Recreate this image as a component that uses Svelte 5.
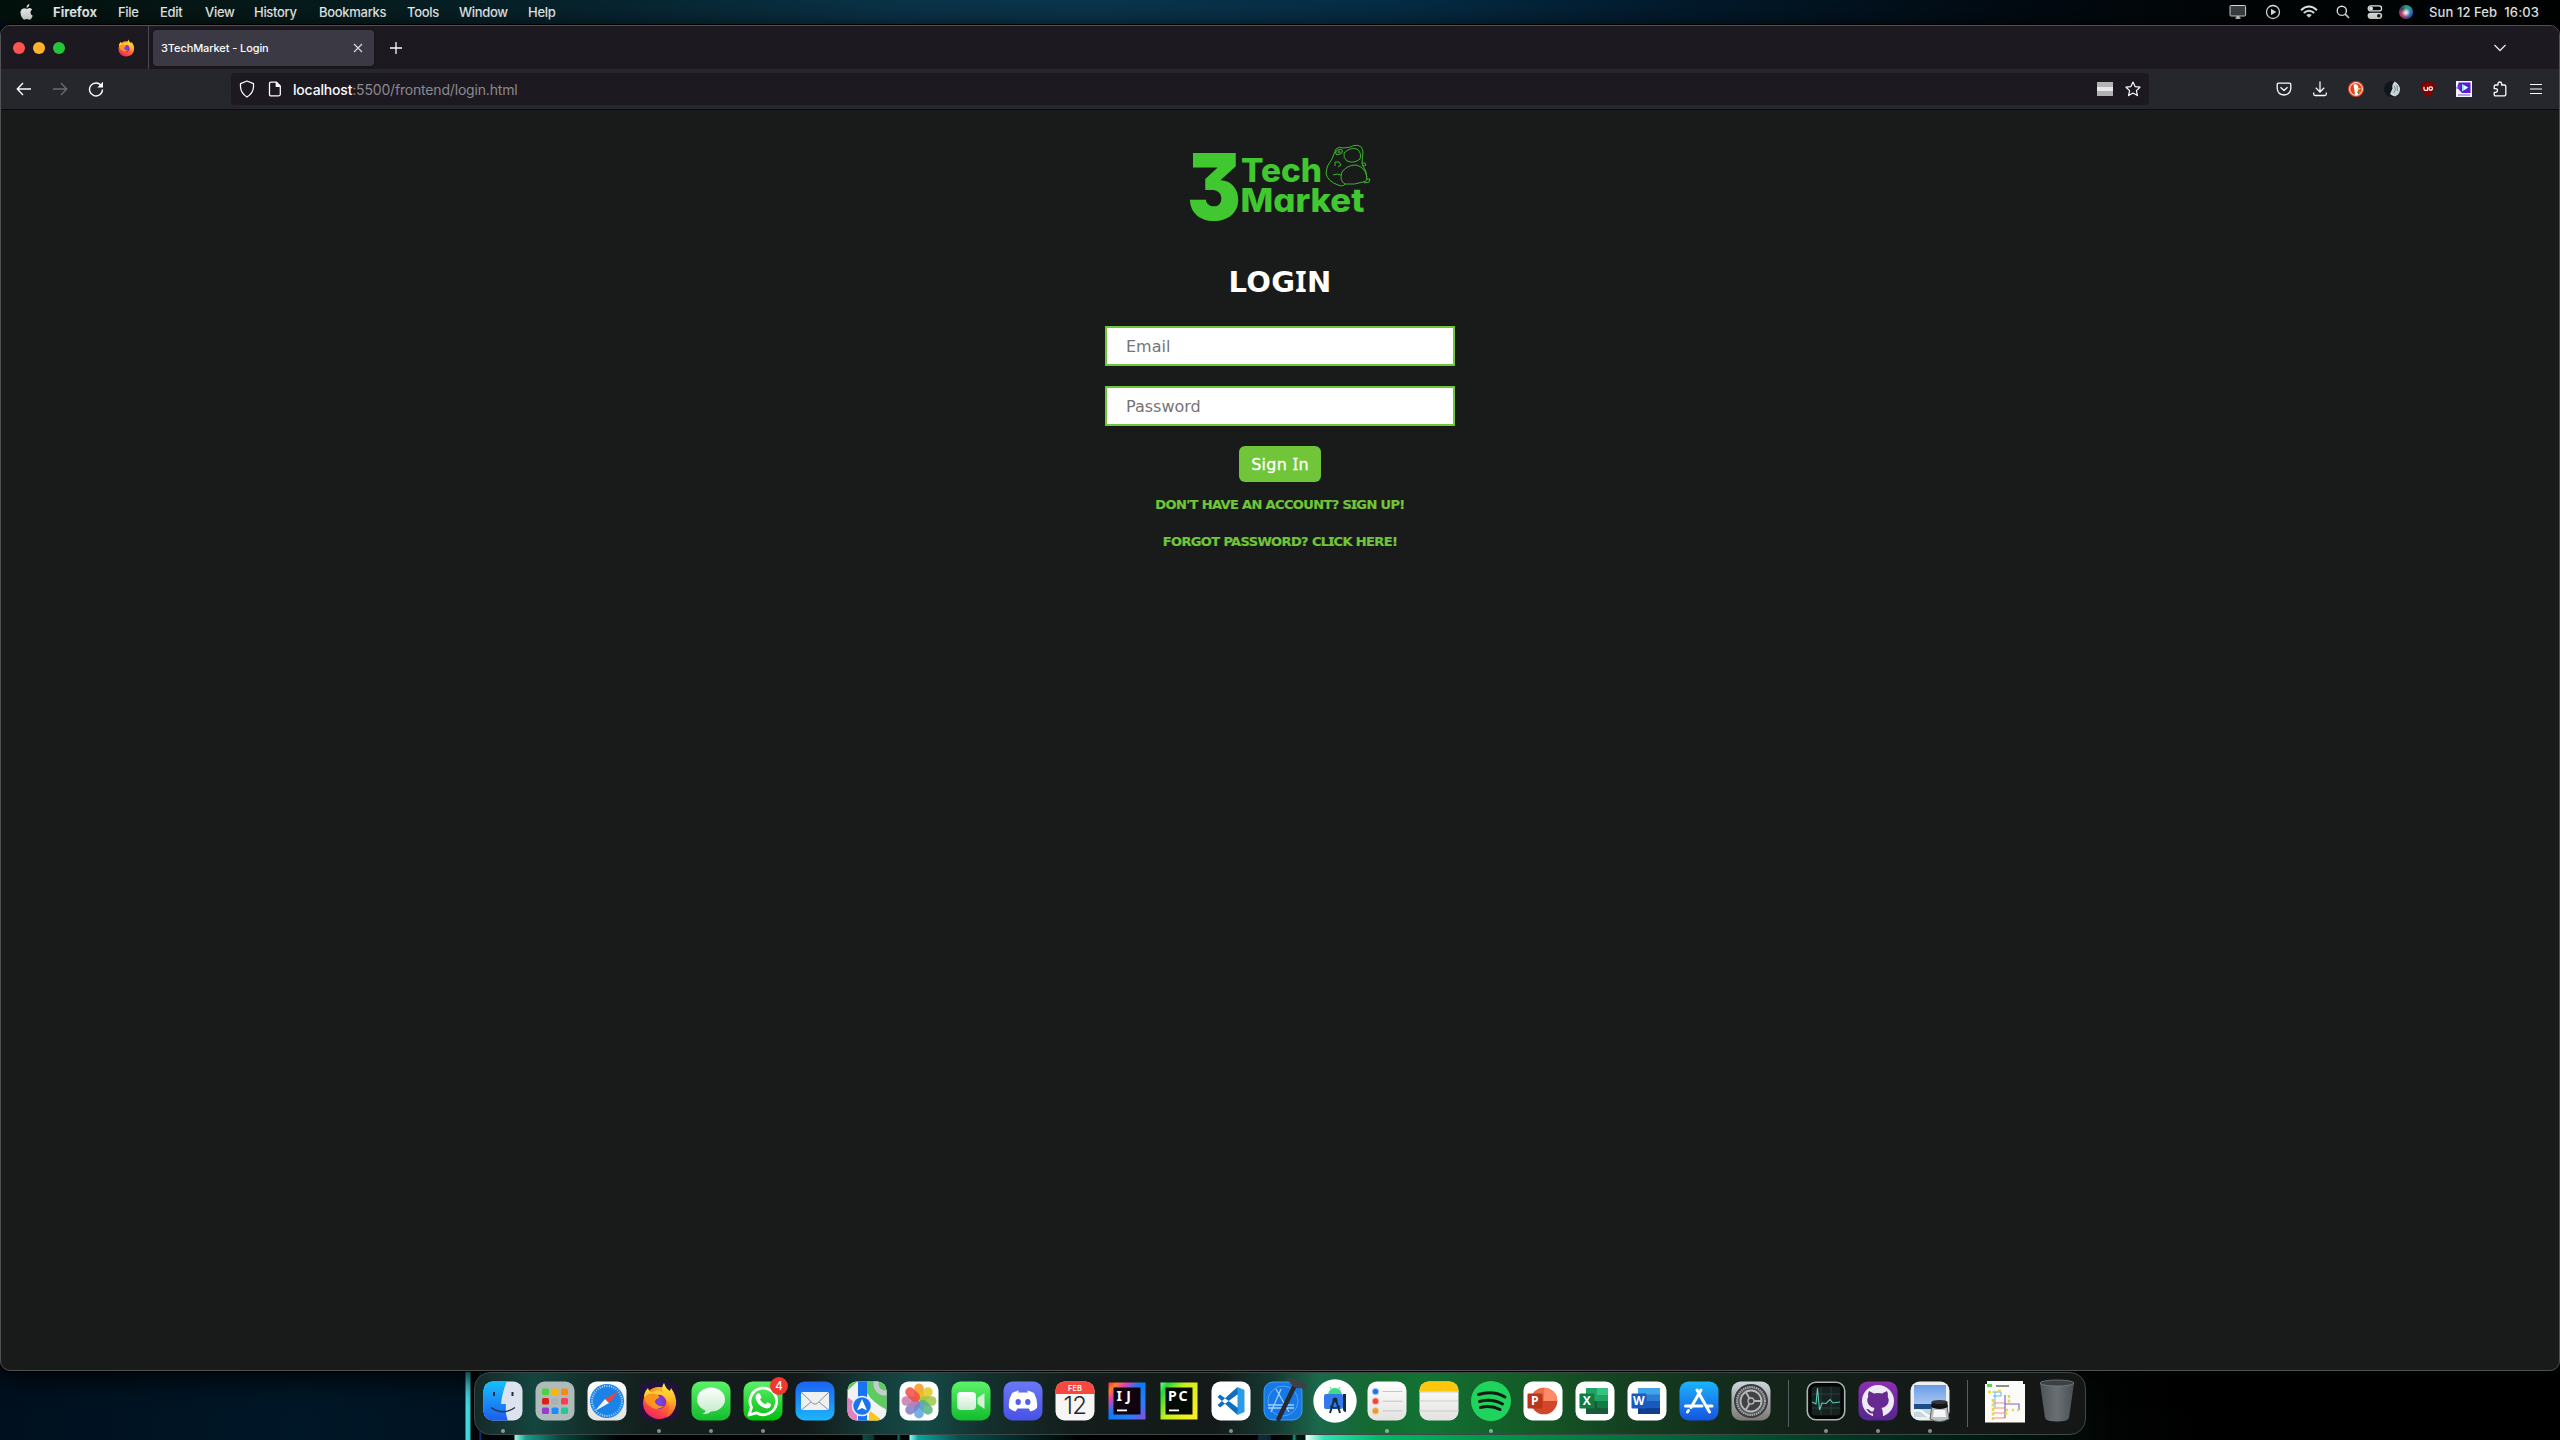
<script>
  const menus = ['File', 'Edit', 'View', 'History', 'Bookmarks', 'Tools', 'Window', 'Help'];
  const petals = ['#f79a1e', '#e3c81c', '#9cc746', '#55b37d', '#5aa5dd', '#7f7cc6', '#c47bae', '#ee4f43'];
  const pads = ['#4fd13c', '#ffb400', '#f98a10', '#e21d18', '#aab0b4', '#ff3a55', '#9a3bd0', '#1a8cff', '#20c997'];
  const ticks = Array.from({ length: 40 }, (_, i) => i * 9);
</script>

{#snippet fox()}
  <circle cx="0" cy="2" r="16" fill="url(#foxBody)" />
  <path d="M-15-4Q-15-9-11-13Q-10-9-7-9Q0-13 4-8Q2-14 5-18Q7-12 11-10L12-13Q18-5 17 4Q15 13 7 17Q14 5 6-3Z" fill="url(#foxTail)" />
  <circle cx="0" cy="1" r="7.2" fill="url(#foxOrb)" />
  <path d="M-15-3Q-11-9-3-7Q1-5 0-3Q-4-2-4 1Q-2 6 5 5Q-3 11-9 5Q-14 2-15-3Z" fill="#ff9420" />
{/snippet}

<svg class="defs" aria-hidden="true">
  <defs>
    <linearGradient id="foxBody" x1=".8" y1="0" x2=".2" y2="1"><stop stop-color="#ffcb25" /><stop offset=".5" stop-color="#ff6a2a" /><stop offset="1" stop-color="#f5156c" /></linearGradient>
    <linearGradient id="foxTail" x1=".5" y1="0" x2=".5" y2="1"><stop stop-color="#fff04a" /><stop offset=".5" stop-color="#ffb524" /><stop offset="1" stop-color="#ff4a3f" /></linearGradient>
    <radialGradient id="foxOrb"><stop stop-color="#6a4dff" /><stop offset="1" stop-color="#8d2bb5" /></radialGradient>
    <linearGradient id="green" x2="0" y2="1"><stop stop-color="#5cf26a" /><stop offset="1" stop-color="#12bd2c" /></linearGradient>
    <linearGradient id="wa" x2="0" y2="1"><stop stop-color="#5fef6b" /><stop offset="1" stop-color="#02bf0c" /></linearGradient>
    <linearGradient id="blue" x2="0" y2="1"><stop stop-color="#1d62f0" /><stop offset="1" stop-color="#1cb6fb" /></linearGradient>
    <linearGradient id="store" x2="0" y2="1"><stop stop-color="#1bb4fb" /><stop offset="1" stop-color="#1554e0" /></linearGradient>
    <linearGradient id="finder" x2="0" y2="1"><stop stop-color="#16c1fb" /><stop offset="1" stop-color="#1c5cf0" /></linearGradient>
    <linearGradient id="paper" x2="0" y2="1"><stop stop-color="#fff" /><stop offset="1" stop-color="#e3e2e0" /></linearGradient>
    <linearGradient id="bubble" x2="0" y2="1"><stop stop-color="#fff" /><stop offset="1" stop-color="#c9ecce" /></linearGradient>
    <linearGradient id="steel" x2="0" y2="1"><stop stop-color="#cdd6dc" /><stop offset="1" stop-color="#7c7875" /></linearGradient>
    <linearGradient id="violet" x2="0" y2="1"><stop stop-color="#8d2fb0" /><stop offset="1" stop-color="#54278f" /></linearGradient>
    <linearGradient id="discord" x2="0" y2="1"><stop stop-color="#6a78f5" /><stop offset="1" stop-color="#4752e6" /></linearGradient>
    <linearGradient id="ij" x1="0" y1="0" x2="1" y2="1"><stop stop-color="#fe2857" /><stop offset=".12" stop-color="#fc801d" /><stop offset=".25" stop-color="#e63fb0" /><stop offset=".45" stop-color="#087cfa" /><stop offset=".75" stop-color="#2a7df5" /><stop offset="1" stop-color="#8a4be8" /></linearGradient>
    <linearGradient id="pc" x1="0" y1="0" x2="1" y2=".6"><stop stop-color="#8df59a" /><stop offset=".15" stop-color="#21d73a" /><stop offset=".5" stop-color="#c8ee1c" /><stop offset="1" stop-color="#f4ee22" /></linearGradient>
    <linearGradient id="sky" x2="0" y2="1"><stop stop-color="#6a9be6" /><stop offset="1" stop-color="#a6c6f2" /></linearGradient>
    <linearGradient id="bin" x2="1" y2="0"><stop stop-color="#50555a" /><stop offset=".5" stop-color="#6a6f74" /><stop offset="1" stop-color="#4a4f54" /></linearGradient>
    <clipPath id="tile"><rect x="-19.5" y="-19.5" width="39" height="39" rx="9" /></clipPath>
  </defs>
</svg>

<div class="desktop">
  <header class="menubar">
    <nav class="menus">
      <svg class="apple" viewBox="0 0 12 15"><path fill="#e8eceb" d="M8.6 0Q8.8 2.8 6 3.6Q6 .8 8.6 0ZM6.2 4.4Q7 4.4 8 3.9Q10.2 3.4 11.3 5.2Q9.5 6.3 9.7 8.2Q9.9 10.2 11.8 11Q10.5 14.6 8.7 14.7Q7.8 14.7 7.2 14.3Q6.2 13.9 5.2 14.4Q4 15 3 14.2Q.2 11.6.3 8Q.6 4.3 3.8 3.9Q5 3.9 6.2 4.4Z" /></svg>
      <b>Firefox</b>
      {#each menus as m}<span>{m}</span>{/each}
    </nav>
    <div class="status">
      <svg width="18" height="16" viewBox="0 0 18 16"><rect x="1" y="1.5" width="15.6" height="10.5" rx="1" fill="#3c4043" stroke="#dadcdd" /><path d="M6.500 14.200h5" stroke="#dadcdd" stroke-width="1.500" /><path d="M9 12v2" stroke="#dadcdd" stroke-width="3" /></svg>
      <svg width="16" height="16" viewBox="0 0 16 16"><circle cx="8" cy="8" r="6.5" fill="none" stroke="#e4e6e7" stroke-width="1.3" /><path d="M6 4.8v6.4L11.3 8Z" fill="#e4e6e7" /></svg>
      <svg width="18" height="14" viewBox="0 0 18 14"><g fill="none" stroke="#e8eaeb" stroke-width="2"><path d="M1 5.2Q9-2.2 17 5.2M3.8 8Q9 3.4 14.2 8" /></g><path d="M9 12.8L6.2 10Q9 7.9 11.8 10Z" fill="#e8eaeb" /></svg>
      <svg width="14" height="14" viewBox="0 0 14 14"><g fill="none" stroke="#e4e6e7" stroke-width="1.4"><circle cx="5.8" cy="5.8" r="4.6" /><path d="M9.2 9.2L13 13" stroke-width="1.7" /></g></svg>
      <svg width="16" height="14" viewBox="0 0 16 14"><rect x="1.2" y=".9" width="13.4" height="5" rx="2.5" fill="none" stroke="#e8eaeb" stroke-width="1.3" /><circle cx="4" cy="3.4" r="2" fill="#e8eaeb" /><rect x=".6" y="7.7" width="14.6" height="6.2" rx="3.1" fill="#e8eaeb" /><circle cx="11.8" cy="10.8" r="1.8" fill="#15191b" /></svg>
      <span class="siri"></span>
      <time>Sun 12 Feb&nbsp; 16:03</time>
    </div>
  </header>

  <section class="window">
    <div class="titlebar">
      <div class="lights"><i class="red"></i><i class="amber"></i><i class="lime"></i></div>
      <div class="pinned"><svg width="18" height="18" viewBox="-19 -19 38 38">{@render fox()}</svg></div>
      <div class="tab">
        <span>3TechMarket - Login</span>
        <svg width="10" height="10" viewBox="0 0 10 10"><path d="M1 1l8 8M9 1L1 9" stroke="#dcdbe0" stroke-width="1.1" /></svg>
      </div>
      <svg class="plus" width="12" height="12" viewBox="0 0 12 12"><path d="M6 0v12M0 6h12" stroke="#fbfbfe" stroke-width="1.3" /></svg>
      <svg class="chevron" width="12" height="8" viewBox="0 0 12 8"><path d="M.5 1l5.500 5.500L11.500 1" fill="none" stroke="#e6e5ea" stroke-width="1.3" /></svg>
    </div>

    <div class="toolbar">
      <div class="history">
        <svg width="16" height="16" viewBox="0 0 16 16"><path d="M15 8H1.500M7 2L1.300 8L7 14" fill="none" stroke="#fbfbfe" stroke-width="1.400" /></svg>
        <svg width="16" height="16" viewBox="0 0 16 16"><path d="M1 8h13.500M9 2l5.700 6L9 14" fill="none" stroke="#6b6c71" stroke-width="1.300" /></svg>
        <svg width="16" height="16" viewBox="0 0 16 16"><path d="M13.500 5A6.500 6.500 0 1 0 14.500 8.500" fill="none" stroke="#fbfbfe" stroke-width="1.400" /><path d="M15 .8v5.700H9.300Z" fill="#fbfbfe" /></svg>
      </div>
      <div class="urlbar">
        <svg class="shield" width="16" height="18" viewBox="0 0 16 18"><path d="M8 1L14.500 3.700V7Q14 13.500 8 17Q2 13.500 1.500 7V3.700Z" fill="none" stroke="#fbfbfe" stroke-width="1.300" stroke-linejoin="round" /></svg>
        <svg class="doc" width="14" height="16" viewBox="0 0 14 16"><path d="M3 1.200H8.500L12.300 5V13.300Q12.300 14.800 10.800 14.800H3Q1.500 14.800 1.500 13.300V2.700Q1.500 1.200 3 1.200ZM8.300 1.200V5.300H12.300" fill="none" stroke="#fbfbfe" stroke-width="1.300" /><path d="M8.300 1v4.300h4Z" fill="#fbfbfe" /></svg>
        <p><b>localhost</b>:5500/frontend/login.html</p>
        <span class="stripes"></span>
        <svg class="star" width="16" height="16" viewBox="0 0 16 16"><path d="M8 1.100L10.100 5.600L15 6.200L11.400 9.600L12.400 14.600L8 12.100L3.600 14.600L4.600 9.600L1 6.200L5.900 5.600Z" fill="none" stroke="#fbfbfe" stroke-width="1.200" stroke-linejoin="round" /></svg>
      </div>
      <div class="extensions">
        <svg width="16" height="16" viewBox="0 0 16 16"><path d="M1.200 3.500Q1.200 2.200 2.500 2.200H13.500Q14.800 2.200 14.800 3.500V7.500Q14.300 13.500 8 14Q1.700 13.500 1.200 7.500ZM4.500 6.300L8 9.500L11.500 6.300" fill="none" stroke="#fbfbfe" stroke-width="1.300" stroke-linejoin="round" /></svg>
        <svg width="16" height="16" viewBox="0 0 16 16"><path d="M8 .5V10.500M3.800 6.800L8 11L12.200 6.800M1.700 11.500V13Q1.700 14.500 3.200 14.500H12.800Q14.300 14.500 14.300 13V11.500" fill="none" stroke="#fbfbfe" stroke-width="1.300" /></svg>
        <svg width="16" height="16" viewBox="0 0 16 16"><circle cx="8" cy="8" r="8" fill="#e0411f" /><circle cx="8" cy="8" r="6.300" fill="none" stroke="#fff" /><path d="M5.500 3.500Q10.500 2.500 10.300 7L12.500 8L10 9L10 13.500Q8 14.500 7 13.500Z" fill="#fff" /><path d="M9.500 7.500l3.500-.5l-1 1.800l-2.500.4Z" fill="#f5b52c" /><path d="M9 11l3-1v2.500l-3-.6Z" fill="#4fae3a" /></svg>
        <svg width="16" height="16" viewBox="0 0 16 16"><circle cx="8" cy="8" r="8" fill="#10171b" /><path d="M10.500 .4Q7.500 3.500 8.500 7.500L6 13Q8 15 11 15.400Q16.500 13 16 7Q14.500 2 10.500 .4Z" fill="#c9d3d8" /><path d="M10.500 5l1 4-2 3M13 4l.5 6" fill="none" stroke="#7b8a92" /></svg>
        <svg width="16" height="16" viewBox="0 0 16 16"><path d="M8 0Q11 2 15 2Q15.500 12 8 16Q.5 12 1 2Q5 2 8 0Z" fill="#800000" /><path d="M4 5.800v2.400Q4 9.300 5.500 9.300H7.500V5.800M9 7.500a1.700 1.700 0 1 0 3.400 0a1.700 1.700 0 1 0-3.400 0" fill="none" stroke="#fff" stroke-width="1.200" /></svg>
        <svg width="16" height="16" viewBox="0 0 16 16"><path d="M0 0h16v16H0Z" fill="#f6f2ff" /><path d="M2.500 1.500H14.500V12H6L1.500 7Z" fill="#5a1bd0" /><path d="M6 3l6.500 3.500L6 10.500Z" fill="#7ff1ff" /><path d="M8 4.500l3.500 2L8 9Z" fill="#fff" /><path d="M1 5h4M0 7h4M2 14h12" stroke="#7a4fd8" /></svg>
        <svg width="16" height="16" viewBox="0 0 16 16"><path d="M6 4V3Q6 1 7.800 1Q9.600 1 9.600 3V4H12.500Q13.800 4 13.800 5.300V13.500Q13.800 14.800 12.500 14.800H3.500Q2.200 14.800 2.200 13.500V11.300H3.500Q5.500 11.300 5.500 9.500Q5.500 7.700 3.500 7.700H2.200V5.300Q2.200 4 3.500 4Z" fill="none" stroke="#fbfbfe" stroke-width="1.300" stroke-linejoin="round" /></svg>
        <svg width="16" height="16" viewBox="0 0 16 16"><path d="M2 3.500h12M2 8h12M2 12.500h12" stroke="#fbfbfe" stroke-width="1.200" /></svg>
      </div>
    </div>

    <main class="page">
      <svg class="logo" width="184" height="82" viewBox="1188 143 184 82" role="img" aria-label="3 Tech Market">
        <g fill="#41c72f">
          <text class="three" x="1187" y="220" textLength="54" lengthAdjust="spacingAndGlyphs">3</text>
          <text class="word" x="1241" y="182" textLength="81" lengthAdjust="spacingAndGlyphs">Tech</text>
          <text class="word" x="1240.500" y="212" textLength="124" lengthAdjust="spacingAndGlyphs">Market</text>
        </g>
        <g fill="none" stroke="#3cb52d" stroke-width="1">
          <path d="M1336 149Q1339 146 1343 148Q1350 148 1354 145.500Q1363 144 1363 153Q1362 160 1362 164Q1367 171 1367 179Q1366 182 1363 182Q1355 185 1345 184Q1343 187 1338 185Q1327 181 1326 173Q1326 166 1332 159Q1334 154 1336 149Z" />
          <ellipse cx="1339" cy="152" rx="3.500" ry="2.300" transform="rotate(-25 1339 152)" />
          <circle cx="1339" cy="152" r="1" />
          <path d="M1344 153Q1350 147 1357 149Q1362 153 1360 159Q1354 164 1347 161Q1343 158 1344 153ZM1342 172Q1347 165 1356 165Q1365 167 1367 177M1342 172Q1339 181 1345 184M1335 166L1335 162L1339 162L1341 165L1338 167M1333 175Q1337 173 1341 175M1362 163Q1366 162 1366 165Q1364 167 1362 165M1366 179L1370 179L1369 182L1364 183" />
        </g>
      </svg>
      <h1>LOG<i>I</i>N</h1>
      <form onsubmit={(e) => e.preventDefault()}>
        <input type="email" placeholder="Email" />
        <input type="password" placeholder="Password" />
        <button>Sign <i>I</i>n</button>
      </form>
      <a class="signup" href="#signup">DON'T HAVE AN ACCOUNT? S<i>I</i>GN UP!</a>
      <a class="forgot" href="#forgot">FORGOT PASSWORD? CL<i>I</i>CK HERE!</a>
    </main>
  </section>

  <footer class="dock">
    <div class="app running"><svg viewBox="-26 -26 52 52"><g clip-path="url(#tile)"><path d="M-20-20H20V20H-20Z" fill="#dde3ee" /><path d="M-20-20H4Q-1-8-2 3H3Q2 13 5 20H-20Z" fill="url(#finder)" /></g><path d="M-9-9v4M9.500-9v4" stroke="#222b3c" stroke-width="2" /><path d="M-12 6.500Q0 15 12 6.500" fill="none" stroke="#28344a" stroke-width="1.500" /></svg></div>
    <div class="app"><svg viewBox="-26 -26 52 52"><rect x="-19.500" y="-19.500" width="39" height="39" rx="9" fill="#afbbb8" />{#each pads as p, i}<rect x={-13 + (i % 3) * 9.5} y={-12.5 + Math.floor(i / 3) * 9.5} width="7" height="6.500" rx="1.500" fill={p} />{/each}</svg></div>
    <div class="app"><svg viewBox="-26 -26 52 52"><rect x="-19.500" y="-19.500" width="39" height="39" rx="9" fill="url(#paper)" /><circle r="17" fill="#1b83e8" />{#each ticks as t}<path d="M0-16V-14" stroke="#d8ebfb" stroke-width=".8" transform="rotate({t})" />{/each}<path d="M12-10L2 2L-2-2Z" fill="#f4413b" /><path d="M-12 10L2 2L-2-2Z" fill="#f1f3f5" /></svg></div>
    <div class="app running"><svg viewBox="-26 -26 52 52"><rect x="-19.500" y="-19.500" width="39" height="39" rx="9" fill="#20143a" />{@render fox()}</svg></div>
    <div class="app running"><svg viewBox="-26 -26 52 52"><rect x="-19.500" y="-19.500" width="39" height="39" rx="9" fill="url(#green)" /><path d="M-5 8Q-5 12-9 13Q-3 13.500 0 10.500Z" fill="#d8efdb" /><ellipse cy="-1.500" rx="14" ry="12" fill="url(#bubble)" /></svg></div>
    <div class="app running"><svg viewBox="-26 -26 52 52"><rect x="-19.500" y="-19.500" width="39" height="39" rx="9" fill="url(#wa)" /><path d="M-14 14L-11.500 6.500A13.300 13.300 0 1 1-6.500 11.800Z" fill="none" stroke="#fff" stroke-width="2.800" stroke-linejoin="round" /><path d="M-7-6Q-5-9-3-7L-1.500-3.500L-3-1.500Q-1 2 2.500 3.300L4.500 1.300L8 3Q8 7 4 7.500Q-5 6-7.500-3Z" fill="#fff" /></svg><span class="badge">4</span></div>
    <div class="app"><svg viewBox="-26 -26 52 52"><rect x="-19.500" y="-19.500" width="39" height="39" rx="9" fill="url(#blue)" /><rect x="-14" y="-9" width="28" height="18" rx="2" fill="#eef0f2" /><path d="M-13-8L-2 2.500Q0 4 2 2.500L13-8M-13 8.500L-4 1M13 8.500L4 1" fill="none" stroke="#8b9298" stroke-width="1" /></svg></div>
    <div class="app"><svg viewBox="-26 -26 52 52"><g clip-path="url(#tile)"><path d="M-20-20H20V20H-20Z" fill="#f2f2f2" /><path d="M-20-20H-9L-20-10ZM0-20H20V9Q6 2 0-8Z" fill="#5ecb61" /><path d="M-20-4L-10 3V20H-20Z" fill="#e282bd" /><path d="M2 9L16 20H2Z" fill="#fcc719" /><path d="M-9-20H0V20H-9Z" fill="#1674f5" /><circle cx="18" cy="-17" r="9" fill="none" stroke="#c5ccd0" stroke-width="5" /></g><circle cx="-5" cy="5" r="9.500" fill="#1a73f0" stroke="#e9f2fc" stroke-width="1.500" /><path d="M-5-2L0 9.500L-5 7L-10 9.500Z" fill="#fff" /></svg></div>
    <div class="app"><svg viewBox="-26 -26 52 52"><rect x="-19.500" y="-19.500" width="39" height="39" rx="9" fill="#fff" />{#each petals as c, i}<rect x="-4.800" y="-17.500" width="9.600" height="17" rx="4.800" fill={c} fill-opacity=".85" transform="rotate({i * 45})" />{/each}</svg></div>
    <div class="app"><svg viewBox="-26 -26 52 52"><rect x="-19.500" y="-19.500" width="39" height="39" rx="9" fill="url(#green)" /><rect x="-14" y="-9" width="19" height="18" rx="4" fill="url(#bubble)" /><path d="M6.500-3L13.500-8V8L6.500 3Z" fill="#d3f2d6" /></svg></div>
    <div class="app"><svg viewBox="-26 -26 52 52"><rect x="-19.500" y="-19.500" width="39" height="39" rx="9" fill="url(#discord)" /><path d="M-4-10.500L-5-8.500H5L4-10.500Q8-10 11-8Q15-1 14 7Q11 10 7.500 10.500L5.500 7.500H-5.500L-7.500 10.500Q-11 10-14 7Q-15-1-11-8Q-8-10-4-10.500Z" fill="#fff" /><ellipse cx="-4.800" cy="1" rx="2.700" ry="3" fill="#5461ec" /><ellipse cx="4.800" cy="1" rx="2.700" ry="3" fill="#5461ec" /></svg></div>
    <div class="app"><svg viewBox="-26 -26 52 52"><g clip-path="url(#tile)"><path d="M-20-20H20V20H-20Z" fill="#f7f6f4" /><path d="M-20-20H20V-7H-20Z" fill="#f8473f" /></g><text class="feb" y="-10.300">FEB</text><text class="day" y="13">12</text></svg></div>
    <div class="app"><svg viewBox="-26 -26 52 52"><rect x="-18.500" y="-18.500" width="37" height="37" fill="url(#ij)" /><path d="M-13.500-13.500H13.500V13.500H-13.500Z" fill="#120310" /><path d="M-10 8.500H0V10.300H-10Z" fill="#fff" /><text class="ide" x="-10.500" textLength="14.500">IJ</text></svg></div>
    <div class="app"><svg viewBox="-26 -26 52 52"><rect x="-18.500" y="-18.500" width="37" height="37" fill="url(#pc)" /><path d="M-13.500-13.500H13.500V13.500H-13.500Z" fill="#020a04" /><path d="M-10 8.500H0V10.300H-10Z" fill="#fff" /><text class="ide" x="-11" textLength="19.500">PC</text></svg></div>
    <div class="app running"><svg viewBox="-26 -26 52 52"><rect x="-19.500" y="-19.500" width="39" height="39" rx="9" fill="#fff" /><path d="M6.500-14L13.500-11V11L6.500 14Z" fill="#2b9ae8" /><path d="M6.500-14L-13.500 4L-11 6.500L7-7ZM6.500 14L-13.500-4L-11-6.500L7 7Z" fill="#0c6fc0" /></svg></div>
    <div class="app"><svg viewBox="-26 -26 52 52"><rect x="-19" y="-19" width="38" height="38" rx="9" fill="#1878e6" stroke="#38a2f4" /><circle r="15" fill="none" stroke="#65b7f6" stroke-width=".7" /><path d="M-12 11L-2-12M-7-12L6 11M-15 4H11M-15 7H11" fill="none" stroke="#9fd0f8" stroke-width="1.300" /><path d="M11-14L-4.500 18" stroke="#26282d" stroke-width="4.500" stroke-linecap="round" /><path d="M2-22Q12-24.500 18-19L24-17.500L22.500-11.500L17-13Q11-12 9-16Q6-20 2-22Z" fill="#3d4147" /></svg></div>
    <div class="app"><svg viewBox="-26 -26 52 52"><circle r="21.700" fill="#fff" /><path d="M-7-6A7 7 0 0 1 7-6Z" fill="#3ddc84" /><path d="M-5-14l2 3M5-14l-2 3" stroke="#3ddc84" /><rect x="-11" y="-7" width="19" height="15" rx="2" fill="#3478ee" /><path d="M8-7h3v18q-3 0-3-3Z" fill="#142c42" /><circle cy="-1" r="2.500" fill="#142c42" /><path d="M-1-1L-5 12M1-1L5 12" fill="none" stroke="#142c42" stroke-width="2" /><path d="M-5 5Q0 9 5 5" fill="none" stroke="#142c42" stroke-width="1.500" /></svg></div>
    <div class="app running"><svg viewBox="-26 -26 52 52"><rect x="-19.500" y="-19.500" width="39" height="39" rx="9" fill="url(#paper)" />{#each ['#1b76f2', '#f2433c', '#f19a27'] as c, i}<circle cx="-11.500" cy={-9.5 + i * 9.7} r="2.600" fill={c} stroke={c} stroke-opacity=".4" stroke-width="2" /><path d="M-4.500 {-9.5 + i * 9.7}H15.500" stroke="#c6c6c6" />{/each}</svg></div>
    <div class="app"><svg viewBox="-26 -26 52 52"><g clip-path="url(#tile)"><path d="M-20-20H20V20H-20Z" fill="url(#paper)" /><path d="M-20-20H20V-9.500H-20Z" fill="#fdc70b" /><path d="M-20-9H20M-20 0H20M-20 10H20" stroke="#c8c5c0" stroke-width=".8" /></g></svg></div>
    <div class="app running"><svg viewBox="-26 -26 52 52"><circle r="20" fill="#1ed45c" /><path d="M-12.500-6.500Q2-11 14-4M-11.500 .5Q1-3 11.500 3M-10.500 6.500Q0 4 9 8.500" fill="none" stroke="#111b14" stroke-width="3" stroke-linecap="round" /></svg></div>
    <div class="app"><svg viewBox="-26 -26 52 52"><rect x="-19.500" y="-19.500" width="39" height="39" rx="9" fill="#fff" /><circle cx="1" r="13.300" fill="#d2472b" /><path d="M1-13.300A13.300 13.300 0 0 1 14.300 0H1Z" fill="#ff8b66" /><path d="M1-13.300A13.300 13.300 0 0 0-12.300 0H1Z" fill="#ed6b47" /><rect x="-15.500" y="-7.500" width="15" height="15" rx="1" fill="#b9351b" /><text class="office" x="-8.200">P</text></svg></div>
    <div class="app"><svg viewBox="-26 -26 52 52"><rect x="-19.500" y="-19.500" width="39" height="39" rx="9" fill="#fff" /><path d="M-9-13H13V13H-9Z" fill="#21a366" /><path d="M2-13H13V-6H2Z" fill="#33c481" /><path d="M-9 0H13V13H-9Z" fill="#185c37" /><path d="M2 0H13V7H2Z" fill="#107c41" /><rect x="-15.500" y="-7.500" width="15" height="15" rx="1" fill="#107c41" /><text class="office" x="-8.200">X</text></svg></div>
    <div class="app"><svg viewBox="-26 -26 52 52"><rect x="-19.500" y="-19.500" width="39" height="39" rx="9" fill="#fff" /><path d="M-9-13H13V13H-9Z" fill="#41a5ee" /><path d="M-9-6.500H13V13H-9Z" fill="#2b7cd3" /><path d="M-9 0H13V13H-9Z" fill="#185abd" /><path d="M-9 7H13V13H-9Z" fill="#103f91" /><rect x="-15.500" y="-7.500" width="15" height="15" rx="1" fill="#185abd" /><text class="office" x="-8.200">W</text></svg></div>
    <div class="app"><svg viewBox="-26 -26 52 52"><rect x="-19.500" y="-19.500" width="39" height="39" rx="9" fill="url(#store)" /><path d="M2-11L-8 6.500M-2-11L10.500 11M-13.500 5H3M8.500 5H13M-10.500 9.500L-11.500 11" fill="none" stroke="#fff" stroke-width="3" stroke-linecap="round" /></svg></div>
    <div class="app"><svg viewBox="-26 -26 52 52"><rect x="-19.500" y="-19.500" width="39" height="39" rx="9" fill="url(#steel)" /><circle r="17" fill="#3c3d3f" /><circle r="14" fill="#55575a" stroke="#a9abad" stroke-width="2" stroke-dasharray="1.500 .7" /><circle r="10.500" fill="#404244" stroke="#b5b7b9" stroke-width="1.800" /><path d="M0 0H11M0 0L-5.500-9.500M0 0L-5.500 9.500" stroke="#b5b7b9" stroke-width="1.800" /><circle r="3" fill="#404244" stroke="#b5b7b9" stroke-width="1.300" /></svg></div>
    <hr />
    <div class="app running"><svg viewBox="-26 -26 52 52"><rect x="-18.700" y="-18.700" width="37.400" height="37.400" rx="8.500" fill="#050505" stroke="#aab6b6" stroke-width="1.600" /><rect x="-14.500" y="-14.500" width="29" height="29" rx="3" fill="#17211f" /><path d="M-14-7H14M-14 7H14M-5-14V14M5-14V14" stroke="#35514c" stroke-width=".6" /><path d="M-14 1L-10 3L-8.500-13L-6.500 9L-4 2L0 2.500L4-1.500L7 2L14 1" fill="none" stroke="#5fcbb8" stroke-width="1.100" /></svg></div>
    <div class="app running"><svg viewBox="-26 -26 52 52"><rect x="-19.500" y="-19.500" width="39" height="39" rx="9" fill="url(#violet)" /><circle r="16" fill="#eceaf2" /><path d="M-9-10L-4-7.500Q0-8.500 4-7.500L9-10Q10.500-7 9.700-4.500Q12 0 9 4Q7 6.500 3.500 7Q5 9 5 16Q0 17.500-5 16V12.500Q-9 13-10.500 9.500L-12 8Q-9 7.500-7.500 10Q-6 11-4.500 10L-3.500 7Q-7 6.500-9 4Q-12 0-9.700-4.500Q-10.500-7-9-10Z" fill="#65298f" /></svg></div>
    <div class="app running"><svg viewBox="-26 -26 52 52"><g clip-path="url(#tile)"><path d="M-20-20H20V20H-20Z" fill="#edeff0" /><path d="M-16-16H16V3H-16Z" fill="url(#sky)" /><path d="M-16 3H16V9H-16Z" fill="#1d4e86" /><path d="M-16 8H16V16H-16Z" fill="#c6d7dd" /><path d="M-16 10Q-10 8-6 12T0 15" fill="none" stroke="#fff" stroke-width="2" /></g><path d="M2 5L0 18Q9 23 19 18L17 5Z" fill="#b9bfc2" stroke="#5b6063" /><path d="M4 9H15L16 16H3Z" fill="#f6f6f4" /><ellipse cx="9.500" cy="5" rx="8.500" ry="3" fill="#111" /><path d="M1.500 1V5H17.500V1Z" fill="#161616" /><ellipse cx="9.500" cy="1" rx="8" ry="2" fill="#33363a" /></svg></div>
    <hr />
    <div class="app"><svg viewBox="-26 -26 52 52"><path d="M-18-20H18V-17H20V21.500H-20V-17H-18Z" fill="#fbfbf8" /><path d="M-18-15.500H-13" stroke="#5bd45a" stroke-width="3" /><path d="M-9-15H4" stroke="#444" stroke-width="1.200" /><path d="M-12-9H-4V-5H-12M-10 6V-9" fill="none" stroke="#63b7e8" /><path d="M-12 2H0M-12 7H0M-12 12H0M-12 17H0" stroke="#f58d85" /><path d="M0-6V17M0 3H14V9" fill="none" stroke="#8561c9" stroke-width="1.200" /><path d="M-12-2V20M-17-9H-12M-7-10H-3M4-6V3M1 9H3M7 9H9M12 9H14M1 14V10" stroke="#e3d84f" stroke-width="2.500" stroke-dasharray="3 1.500" /></svg></div>
    <div class="app"><svg viewBox="-26 -26 52 52"><path d="M-17-18L-12 17Q-11 20.500 0 20.500Q11 20.500 12 17L17-18Z" fill="url(#bin)" /><ellipse cy="-18" rx="17" ry="3" fill="#3b4044" stroke="#777d82" stroke-width=".8" /></svg></div>
  </footer>
</div>

<style>
  :global(body) { margin: 0; background: #000; overflow: hidden; }
  * { box-sizing: border-box; }
  .defs { position: absolute; width: 0; height: 0; }
  .desktop {
    width: 2560px; height: 1440px; display: flex; flex-direction: column; overflow: hidden;
    font-family: Inter, "Liberation Sans", sans-serif;
    background:
      linear-gradient(90deg, transparent 465px, #45dfe2 466px, #3bc9d0 470px, #020608 471px, #020608 479px, #123f8c 480px, #020608 482px, #020608 514px, #9cf5e5 515px, #16a08c 526px, #064840 560px, #000 620px, #010504 862px, #0b4a44 863px, #0b3834 873px, #020606 875px, #020606 897px, #0e7d77 898px, #020606 901px, #020606 909px, #8ff4ee 910px, #08a6a0 918px, #06504e 960px, #000 1080px, #000 1257px, #0a2e3c 1259px, #0a2433 1270px, #000 1272px, #001008 1292px, #1b9b8e 1294px, #00170e 1297px, #00170e 1305px, #f0fff9 1306px, #30e2b3 1324px, #00b86a 1380px, #009c4d 1470px, #005f37 1700px, #002a1b 1900px, #020403 2110px, #000 2200px) 0 1372px / 100% 68px no-repeat,
      linear-gradient(90deg, #00101f, #001727 300px, #001322 466px, #000 470px);
  }
  .menubar {
    height: 24px; flex: none; display: flex; justify-content: space-between; color: #edf1f1; font-size: 13px; font-weight: 500;
    background: linear-gradient(90deg, #03110d 0, #061b1b 300px, #07242f 600px, #0a3348 900px, #0a354c 1100px, #052c44 1400px, #031c2f 1650px, #020b13 2000px, #020506 2250px, #010303 2560px);
  }
  .menus { display: grid; grid-template-columns: 33px 65px 42px 45px 49px 65px 88px 52px 69px 50px; padding: 0 0 1px 20px; align-items: center; letter-spacing: -.3px; }
  .menus b { letter-spacing: 0; }
  .apple { width: 13px; height: 16px; }
  .status { display: grid; grid-template-columns: 36px 34px 37px 32px 32px 30px 139px; justify-items: center; align-items: center; }
  .status time { justify-self: start; padding: 0 0 1px 8px; white-space: pre; letter-spacing: .1px; }
  .siri { width: 14px; height: 14px; border-radius: 50%; background: radial-gradient(circle at 50% 55%, #fff 8%, transparent 45%), conic-gradient(#26a57a, #2a9aa0, #2f6fd0, #3d62c0, #c53a66, #d23d7c, #45406e, #26a57a); }
  .window {
    height: 1346px; margin-top: 1px; flex: none; display: flex; flex-direction: column; overflow: hidden;
    border: 1px solid #505152; border-radius: 10px; background: #191b1a; box-shadow: 0 0 0 1px #000, 0 6px 28px #000;
  }
  .titlebar { height: 43px; flex: none; display: flex; align-items: center; background: #1c1920; }
  .lights { width: 103px; padding-left: 12px; display: flex; gap: 8px; }
  .lights i { width: 12px; height: 12px; border-radius: 50%; }
  .red { background: #ff544d; }
  .amber { background: #ffb42b; }
  .lime { background: #26c438; }
  .pinned { width: 45px; align-self: stretch; display: flex; align-items: center; justify-content: center; border-right: 1px solid #4a484f; }
  .tab { width: 221px; height: 36px; margin-left: 4px; padding: 0 11px 0 8px; display: flex; justify-content: space-between; align-items: center; border-radius: 4px; background: #3b3944; color: #fbfbfe; font-size: 11px; font-weight: 500; letter-spacing: -.1px; box-shadow: 0 0 3px #0006; }
  .plus { margin-left: 16px; }
  .chevron { margin-left: auto; margin-right: 53px; }
  .toolbar { height: 41px; flex: none; display: flex; align-items: center; background: #26272c; border-bottom: 1px solid #0c0c0e; }
  .history { width: 230px; padding-left: 15px; display: flex; gap: 20px; }
  .urlbar { width: 1918px; height: 32px; padding: 0 8px; display: flex; align-items: center; border-radius: 4px; background: #1c1920; }
  .doc { margin-left: 13px; }
  .urlbar p { margin: 0 auto 0 11px; font-size: 14px; color: #8a8990; letter-spacing: -.18px; }
  .urlbar p b { font-weight: 500; color: #fbfbfe; }
  .stripes { width: 16px; height: 14px; margin-right: 12px; background: linear-gradient(#b4b4b4 5px, #e8e8e8 5px 9px, #b0b0b0 9px); }
  .extensions { margin-left: auto; padding-right: 5px; display: grid; grid-template-columns: repeat(8, 36px); justify-items: center; }
  .page { flex: 1; display: flex; flex-direction: column; align-items: center; font-family: Verdana, "DejaVu Sans", sans-serif; }
  .page i { font-family: "Noto Sans", sans-serif; font-style: normal; }
  .logo { margin-top: 33px; flex: none; overflow: visible; }
  .three, .word { font-family: Inter, sans-serif; font-weight: 900; font-feature-settings: "cv09", "cv11"; }
  .three { font-size: 92px; }
  .word { font-size: 32px; font-weight: 800; }
  h1 { margin: 39px 0 0; height: 34px; line-height: 34px; font-size: 29px; letter-spacing: .3px; color: #fff; }
  form { margin-top: 28px; display: flex; flex-direction: column; align-items: center; gap: 20px; }
  input { width: 350px; height: 40px; padding: 0 19px; border: 2px solid #70c538; background: #fff; font: 16px Verdana, "DejaVu Sans", sans-serif; }
  input::placeholder { color: #757575; opacity: 1; }
  button { width: 82px; height: 36px; padding: 0; border: 0; border-radius: 6px; background: #70c538; color: #fff; font: 16px Verdana, "DejaVu Sans", sans-serif; letter-spacing: .3px; -webkit-text-stroke: .3px #fff; white-space: nowrap; }
  a { height: 20px; line-height: 20px; font-size: 13px; font-weight: 900; color: #70c538; text-decoration: none; letter-spacing: -.63px; -webkit-text-stroke: .2px #70c538; }
  .signup { margin-top: 12px; }
  .forgot { margin-top: 17px; }
  .dock {
    width: 1612px; height: 63px; margin: 1px 0 0 474px; flex: none; display: flex; padding: 2px 2px 0; border: 1px solid #3c4845; border-radius: 16px;
    background: linear-gradient(90deg, #142a29, #14453f 60px, #13302c 110px, #131f1d 170px, #131a19 330px, #14403d 410px, #144a47 450px, #13302d 510px, #131d1b 600px, #131a19 740px, #163a33 800px, #1b6a4c 845px, #14692f 900px, #127233 950px, #145826 1060px, #143c20 1170px, #13251a 1290px, #141b18 1400px, #151616);
  }
  .app { position: relative; width: 52px; flex: none; display: flex; flex-direction: column; align-items: center; }
  .app > svg { width: 52px; height: 52px; flex: none; }
  .running::after { content: ''; width: 4px; height: 4px; margin-top: 2px; border-radius: 50%; background: #ffffff80; }
  .badge { position: absolute; right: 1px; top: 2px; width: 18px; height: 18px; border-radius: 50%; background: #f1382e; color: #fff; font-size: 11.500px; font-weight: 500; line-height: 18px; text-align: center; }
  .dock hr { width: 1px; height: 47px; margin: 5px 11px 0; border: 0; background: #566260; }
  .feb, .day, .office { text-anchor: middle; }
  .feb { font-size: 7.500px; font-weight: 600; fill: #fff; }
  .day { font-size: 24px; font-weight: 300; fill: #26282a; letter-spacing: -.5px; }
  .ide { font: 700 14px "Noto Sans", sans-serif; fill: #fff; }
  .office { font: 700 12px "Open Sans", sans-serif; fill: #fff; transform: translateY(4.300px); }
</style>
